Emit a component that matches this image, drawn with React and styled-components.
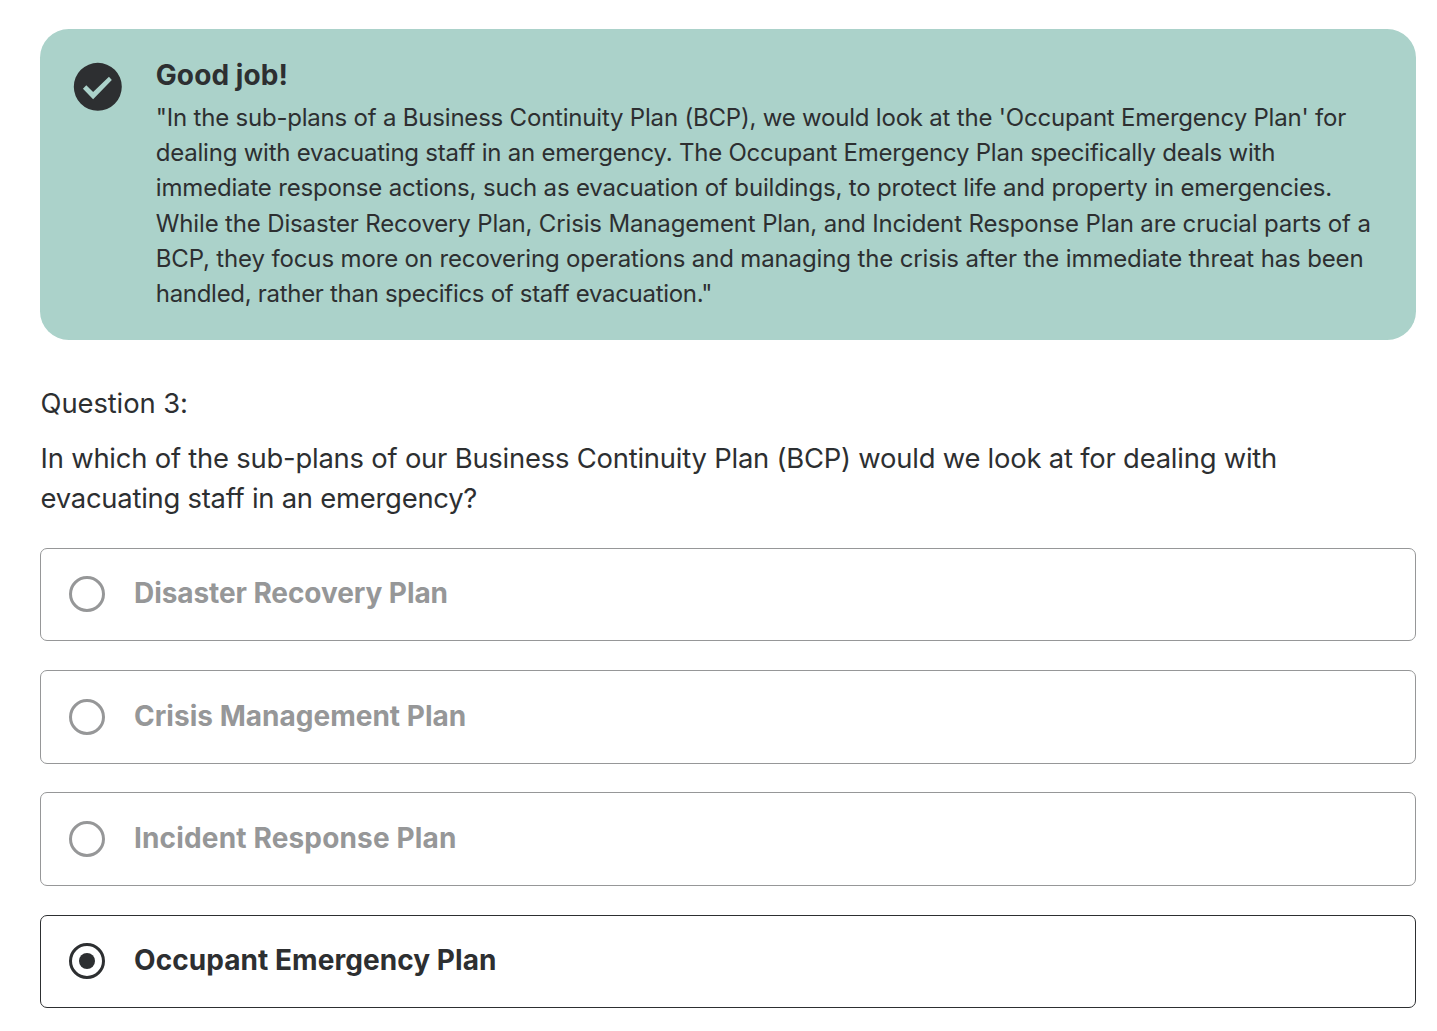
import React from 'react';
import styled, { createGlobalStyle } from 'styled-components';

const GlobalStyle = createGlobalStyle`
  * { box-sizing: border-box; }
  body {
    margin: 0;
    background: #fff;
    color: #2d2f31;
    font-family: Inter, "Liberation Sans", sans-serif;
  }
  h2, h3, p { margin: 0; }
`;

const Page = styled.main`
  display: flex;
  flex-direction: column;
  width: 1437px;
  height: 1031px;
  padding: 29px 21px 0 40px;
  overflow: hidden;
`;

const Feedback = styled.section`
  display: flex;
  gap: 29.4px;
  height: 311px;
  padding: 29px 28.8px 0;
  border-radius: 28.8px;
  background: #abd2ca;
`;

const StatusIcon = styled.svg`
  flex: none;
  width: 57.6px;
  height: 57.6px;
  fill: #2d2f31;
`;

const FeedbackBody = styled.div`
  flex: 1;
  min-width: 0;
`;

const FeedbackTitle = styled.h2`
  margin-bottom: 7.3px;
  font-size: 28px;
  font-weight: 700;
  line-height: 34.6px;
  letter-spacing: 0.08px;
`;

const FeedbackText = styled.p`
  font-size: 24px;
  line-height: 35.25px;
`;

const Line = styled.span`
  display: block;
  white-space: nowrap;
  letter-spacing: ${({ $tracking }) => $tracking}px;
`;

const Question = styled.section`
  display: flex;
  flex-direction: column;
  gap: 14.6px;
  margin: 42.6px 0 29.5px;
  padding-left: 0.6px;
  font-size: 27.4px;
  line-height: 40.32px;
`;

const QuestionNumber = styled.h3`
  font-size: inherit;
  font-weight: 400;
  letter-spacing: -0.1px;
`;

const Options = styled.div`
  display: flex;
  flex-direction: column;
  gap: 28.8px;
`;

const Option = styled.div`
  display: flex;
  gap: 29px;
  height: 93.6px;
  padding: 27.5px 28px;
  border: 1px solid currentColor;
  border-radius: 7px;
  color: ${({ $selected }) => ($selected ? '#2d2f31' : '#969798')};
`;

const Radio = styled.span`
  display: grid;
  place-items: center;
  flex: none;
  width: 36px;
  height: 36px;
  border: 3px solid currentColor;
  border-radius: 50%;
`;

const RadioDot = styled.span`
  width: 16px;
  height: 16px;
  border-radius: 50%;
  background: currentColor;
`;

const OptionLabel = styled.span`
  font-size: 28px;
  font-weight: 700;
  line-height: 34px;
  white-space: nowrap;
  letter-spacing: ${({ $tracking }) => $tracking}px;
`;

const explanation = [
  { text: '"In the sub-plans of a Business Continuity Plan (BCP), we would look at the \'Occupant Emergency Plan\' for', tracking: -0.205 },
  { text: 'dealing with evacuating staff in an emergency. The Occupant Emergency Plan specifically deals with', tracking: -0.225 },
  { text: 'immediate response actions, such as evacuation of buildings, to protect life and property in emergencies.', tracking: -0.17 },
  { text: 'While the Disaster Recovery Plan, Crisis Management Plan, and Incident Response Plan are crucial parts of a', tracking: -0.15 },
  { text: 'BCP, they focus more on recovering operations and managing the crisis after the immediate threat has been', tracking: -0.14 },
  { text: 'handled, rather than specifics of staff evacuation."', tracking: -0.3 },
];

const prompt = [
  { text: 'In which of the sub-plans of our Business Continuity Plan (BCP) would we look at for dealing with', tracking: -0.215 },
  { text: 'evacuating staff in an emergency?', tracking: -0.24 },
];

const options = [
  { label: 'Disaster Recovery Plan', tracking: -0.08 },
  { label: 'Crisis Management Plan', tracking: 0.02 },
  { label: 'Incident Response Plan', tracking: 0.16 },
  { label: 'Occupant Emergency Plan', tracking: 0.06, selected: true },
];

export default function App() {
  return (
    <>
      <GlobalStyle />
      <Page>
        <Feedback>
          <StatusIcon viewBox="0 0 24 24" aria-hidden="true">
            <path
              fillRule="evenodd"
              d="M12 2a10 10 0 1 0 0 20 10 10 0 0 0 0-20zM10.05 17.2 5.8 12.8l1.4-1.45 2.85 2.8 6.6-6.3 1.2 1.3z"
            />
          </StatusIcon>
          <FeedbackBody>
            <FeedbackTitle>Good job!</FeedbackTitle>
            <FeedbackText>
              {explanation.map((line) => (
                <Line key={line.text} $tracking={line.tracking}>{line.text}</Line>
              ))}
            </FeedbackText>
          </FeedbackBody>
        </Feedback>
        <Question>
          <QuestionNumber>Question 3:</QuestionNumber>
          <p>
            {prompt.map((line) => (
              <Line key={line.text} $tracking={line.tracking}>{line.text}</Line>
            ))}
          </p>
        </Question>
        <Options role="radiogroup">
          {options.map(({ label, tracking, selected }) => (
            <Option key={label} role="radio" aria-checked={!!selected} $selected={selected}>
              <Radio>{selected && <RadioDot />}</Radio>
              <OptionLabel $tracking={tracking}>{label}</OptionLabel>
            </Option>
          ))}
        </Options>
      </Page>
    </>
  );
}
